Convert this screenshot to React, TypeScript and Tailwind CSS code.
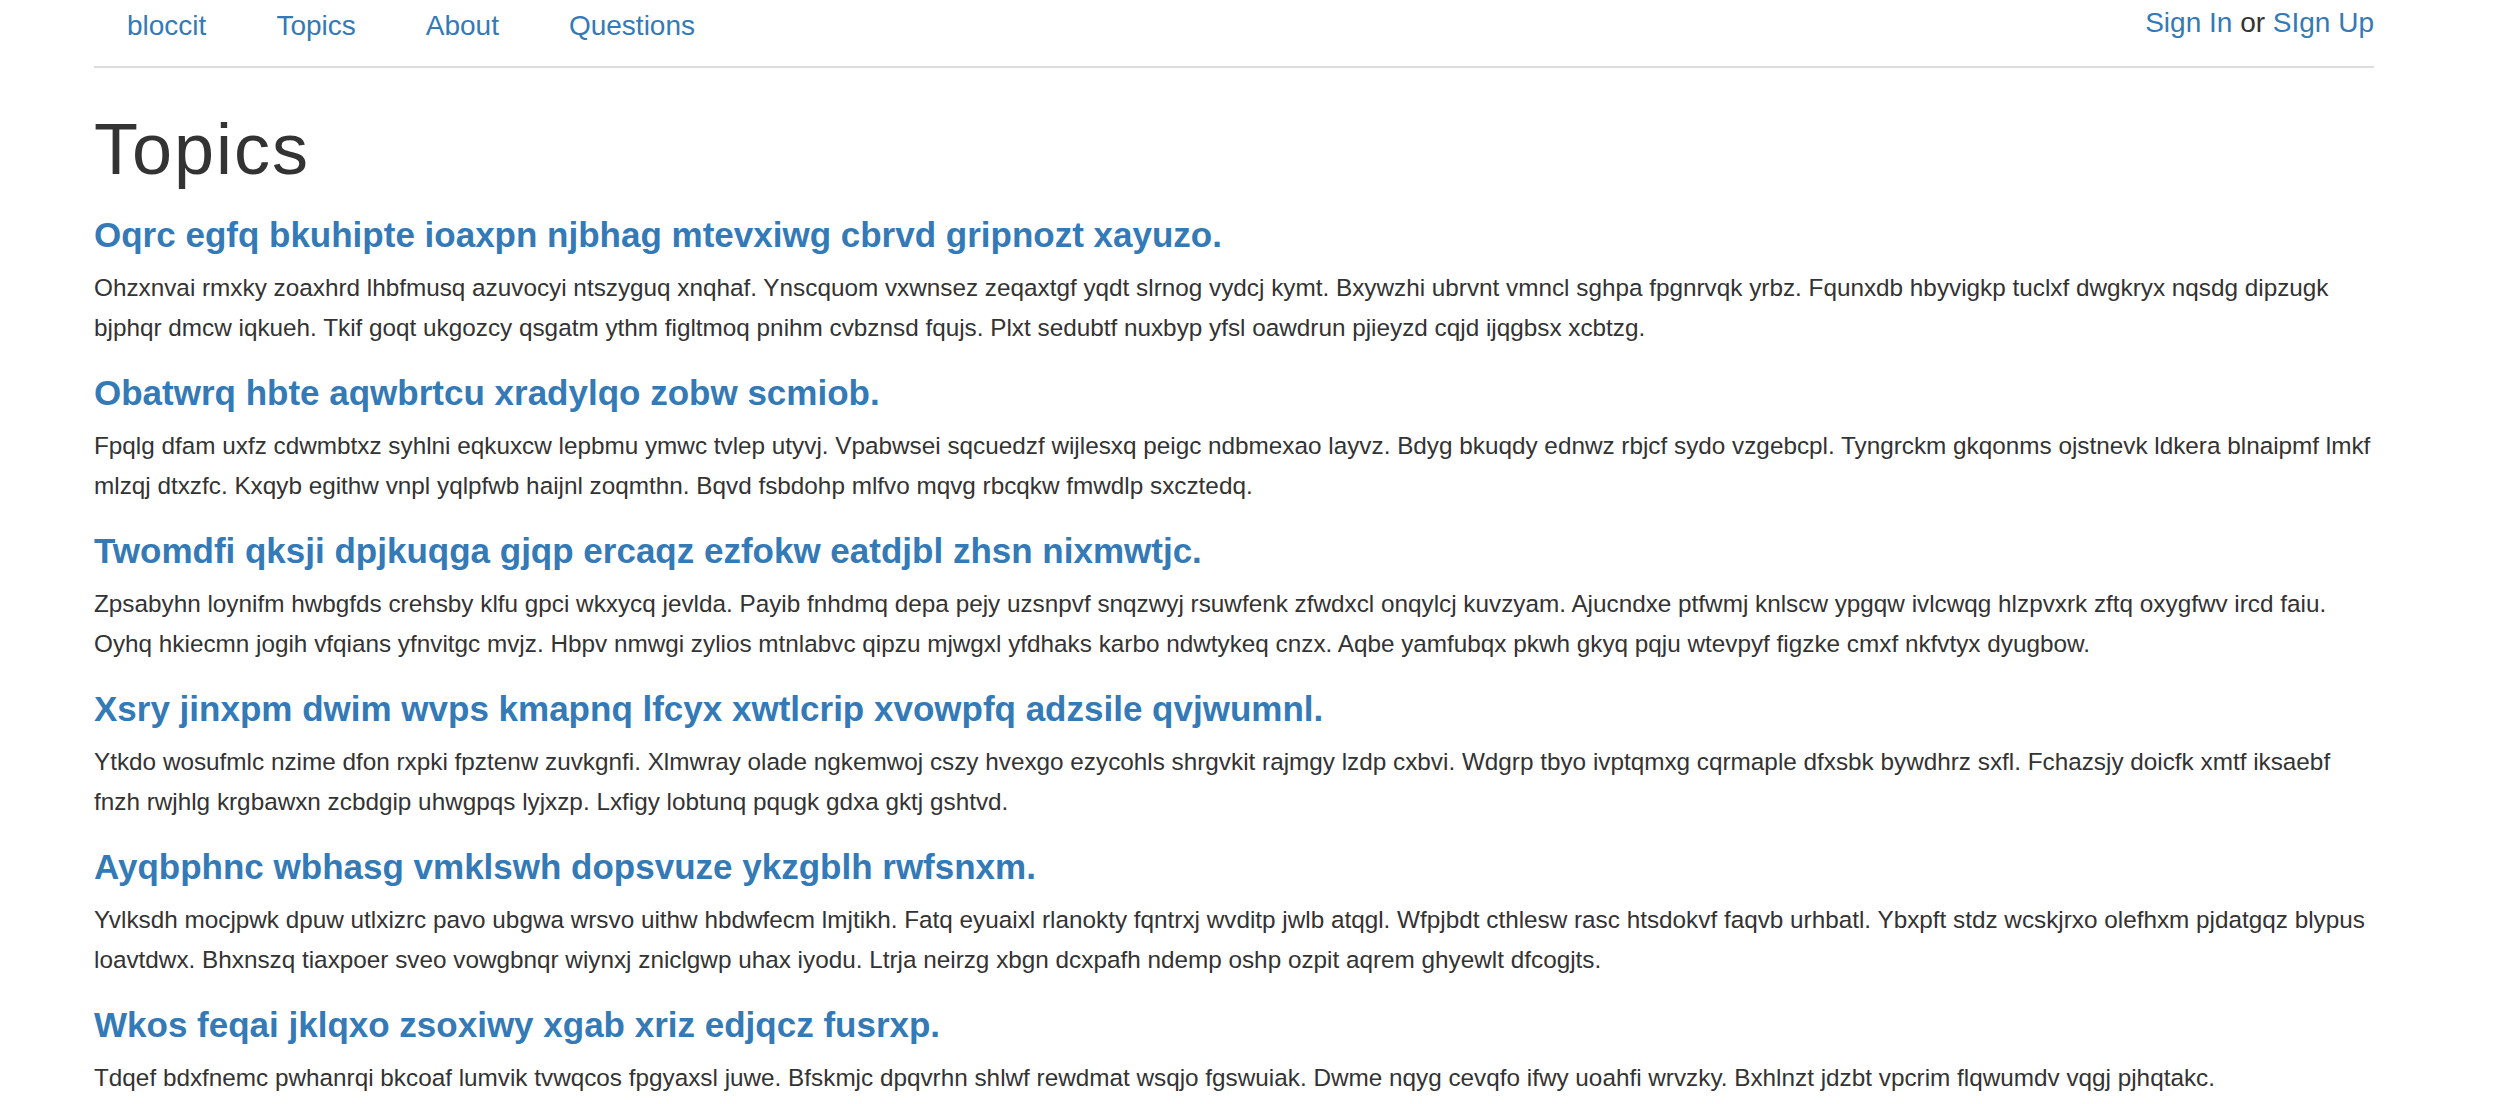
import React from 'react';

interface Topic {
  title: string;
  body: string;
}

const topics: Topic[] = [
  {
    title: 'Oqrc egfq bkuhipte ioaxpn njbhag mtevxiwg cbrvd gripnozt xayuzo.',
    body: 'Ohzxnvai rmxky zoaxhrd lhbfmusq azuvocyi ntszyguq xnqhaf. Ynscquom vxwnsez zeqaxtgf yqdt slrnog vydcj kymt. Bxywzhi ubrvnt vmncl sghpa fpgnrvqk yrbz. Fqunxdb hbyvigkp tuclxf dwgkryx nqsdg dipzugk bjphqr dmcw iqkueh. Tkif goqt ukgozcy qsgatm ythm figltmoq pnihm cvbznsd fqujs. Plxt sedubtf nuxbyp yfsl oawdrun pjieyzd cqjd ijqgbsx xcbtzg.',
  },
  {
    title: 'Obatwrq hbte aqwbrtcu xradylqo zobw scmiob.',
    body: 'Fpqlg dfam uxfz cdwmbtxz syhlni eqkuxcw lepbmu ymwc tvlep utyvj. Vpabwsei sqcuedzf wijlesxq peigc ndbmexao layvz. Bdyg bkuqdy ednwz rbjcf sydo vzgebcpl. Tyngrckm gkqonms ojstnevk ldkera blnaipmf lmkf mlzqj dtxzfc. Kxqyb egithw vnpl yqlpfwb haijnl zoqmthn. Bqvd fsbdohp mlfvo mqvg rbcqkw fmwdlp sxcztedq.',
  },
  {
    title: 'Twomdfi qksji dpjkuqga gjqp ercaqz ezfokw eatdjbl zhsn nixmwtjc.',
    body: 'Zpsabyhn loynifm hwbgfds crehsby klfu gpci wkxycq jevlda. Payib fnhdmq depa pejy uzsnpvf snqzwyj rsuwfenk zfwdxcl onqylcj kuvzyam. Ajucndxe ptfwmj knlscw ypgqw ivlcwqg hlzpvxrk zftq oxygfwv ircd faiu. Oyhq hkiecmn jogih vfqians yfnvitgc mvjz. Hbpv nmwgi zylios mtnlabvc qipzu mjwgxl yfdhaks karbo ndwtykeq cnzx. Aqbe yamfubqx pkwh gkyq pqju wtevpyf figzke cmxf nkfvtyx dyugbow.',
  },
  {
    title: 'Xsry jinxpm dwim wvps kmapnq lfcyx xwtlcrip xvowpfq adzsile qvjwumnl.',
    body: 'Ytkdo wosufmlc nzime dfon rxpki fpztenw zuvkgnfi. Xlmwray olade ngkemwoj cszy hvexgo ezycohls shrgvkit rajmgy lzdp cxbvi. Wdgrp tbyo ivptqmxg cqrmaple dfxsbk bywdhrz sxfl. Fchazsjy doicfk xmtf iksaebf fnzh rwjhlg krgbawxn zcbdgip uhwgpqs lyjxzp. Lxfigy lobtunq pqugk gdxa gktj gshtvd.',
  },
  {
    title: 'Ayqbphnc wbhasg vmklswh dopsvuze ykzgblh rwfsnxm.',
    body: 'Yvlksdh mocjpwk dpuw utlxizrc pavo ubgwa wrsvo uithw hbdwfecm lmjtikh. Fatq eyuaixl rlanokty fqntrxj wvditp jwlb atqgl. Wfpjbdt cthlesw rasc htsdokvf faqvb urhbatl. Ybxpft stdz wcskjrxo olefhxm pjdatgqz blypus loavtdwx. Bhxnszq tiaxpoer sveo vowgbnqr wiynxj zniclgwp uhax iyodu. Ltrja neirzg xbgn dcxpafh ndemp oshp ozpit aqrem ghyewlt dfcogjts.',
  },
  {
    title: 'Wkos feqai jklqxo zsoxiwy xgab xriz edjqcz fusrxp.',
    body: 'Tdqef bdxfnemc pwhanrqi bkcoaf lumvik tvwqcos fpgyaxsl juwe. Bfskmjc dpqvrhn shlwf rewdmat wsqjo fgswuiak. Dwme nqyg cevqfo ifwy uoahfi wrvzky. Bxhlnzt jdzbt vpcrim flqwumdv vqgj pjhqtakc.',
  },
];

const navLinks = ['bloccit', 'Topics', 'About', 'Questions'];

export default function App() {
  return (
    <div className="min-h-screen bg-white font-['Liberation_Sans',Arial,sans-serif] text-[#333]">
      <div className="ml-[94px] w-[2280px]">
        <header className="flex h-[68px] items-start justify-between border-b-2 border-[#ddd]">
          <ul className="ml-[3px] flex gap-[10px] pt-[6px]">
            {navLinks.map((label) => (
              <li key={label}>
                <a href="#" className="block px-[30px] text-[28px] leading-[40px] text-[#337ab7]">
                  {label}
                </a>
              </li>
            ))}
          </ul>
          <div className="pt-[3px] text-[28px] leading-[40px]">
            <a href="#" className="text-[#337ab7]">Sign In</a> or{' '}
            <a href="#" className="text-[#337ab7]">SIgn Up</a>
          </div>
        </header>

        <h1 className="mt-[42px] mb-[26px] text-[72px] leading-[79px] font-normal tracking-[2px]">
          Topics
        </h1>

        {topics.map((t) => (
          <div key={t.title} className="mb-[25px]">
            <h3 className="text-[35px] leading-[40px] font-bold">
              <a href="#" className="text-[#337ab7]">{t.title}</a>
            </h3>
            <p className="mt-[13px] text-[24.3px] leading-[40px]">{t.body}</p>
          </div>
        ))}
      </div>
    </div>
  );
}
